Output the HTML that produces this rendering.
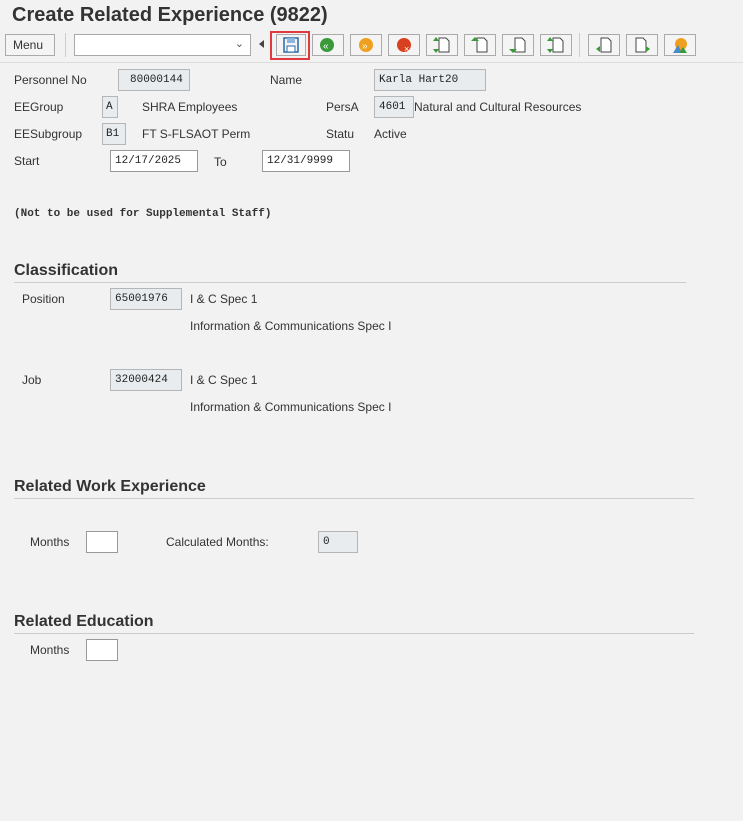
<!DOCTYPE html>
<html><head><style>
body{margin:0;width:743px;height:821px;background:#f2f2f2;font-family:"Liberation Sans",Arial,sans-serif;font-size:12px;color:#333;position:relative;overflow:hidden}
.a{position:absolute;white-space:nowrap}
.t{font-size:20px;font-weight:bold;color:#333}
.h{font-size:16px;font-weight:bold;color:#333}
.box{position:absolute;border:1px solid #b5b5b5;background:#e9ecee;font-family:"Liberation Mono",monospace;font-size:11px;line-height:20px;box-sizing:border-box;padding-left:4px;color:#222}
.w{background:#fff;border-color:#999}
.btn{position:absolute;top:34px;width:32px;height:22px;border:1px solid #aaa;background:#f4f4f4;box-sizing:border-box}
.line{position:absolute;height:1px;background:#ccc}
</style></head><body>
<div class="a t" style="left:12px;top:4px">Create Related Experience (9822)</div>
<div class="a" style="left:5px;top:34px;width:50px;height:22px;border:1px solid #aaa;background:#f4f4f4;box-sizing:border-box;font-size:12px;line-height:20px;padding-left:7px">Menu</div>
<div class="a" style="left:65px;top:33px;width:1px;height:24px;background:#ccc"></div>
<div class="a" style="left:74px;top:34px;width:177px;height:22px;border:1px solid #aaa;background:#fff;box-sizing:border-box"><span style="position:absolute;right:6px;top:2px;font-size:11px;color:#555">⌄</span></div>
<div class="a" style="left:259px;top:40px;width:0;height:0;border-top:4px solid transparent;border-bottom:4px solid transparent;border-right:5px solid #444"></div>
<div class="a" style="left:270px;top:31px;width:40px;height:29px;border:2px solid #e0393e;box-sizing:border-box"></div>
<div class="btn" style="left:276px;width:30px"><svg width="28" height="20"><rect x="7" y="3" width="14" height="14" fill="none" stroke="#2a6aa8" stroke-width="1.5"/><rect x="10" y="3" width="8" height="5" fill="#8fb7dc"/><rect x="10" y="11" width="8" height="6" fill="#fff" stroke="#2a6aa8"/></svg></div>
<div class="btn" style="left:312px"><svg width="30" height="20"><circle cx="14" cy="10" r="7" fill="#3a9a3a"/><text x="10" y="14" font-size="10" fill="#fff">«</text></svg></div>
<div class="btn" style="left:350px"><svg width="30" height="20"><circle cx="15" cy="10" r="7" fill="#f0a020"/><text x="11" y="14" font-size="10" fill="#fff">»</text></svg></div>
<div class="btn" style="left:388px"><svg width="30" height="20"><circle cx="15" cy="10" r="7" fill="#d84020"/><text x="15" y="17" font-size="9" fill="#fff">×</text></svg></div>
<div class="btn" style="left:426px"><svg width="30" height="20"><path d="M12 3h7l3 3v11h-10z" fill="#fff" stroke="#444"/><path d="M9 2l3 4h-6zM9 18l3-4h-6z" fill="#3a9a3a"/></svg></div>
<div class="btn" style="left:464px"><svg width="30" height="20"><path d="M12 3h7l3 3v11h-10z" fill="#fff" stroke="#444"/><path d="M10 2l4 4h-8z" fill="#3a9a3a"/></svg></div>
<div class="btn" style="left:502px"><svg width="30" height="20"><path d="M12 3h7l3 3v11h-10z" fill="#fff" stroke="#444"/><path d="M10 18l4-4h-8z" fill="#3a9a3a"/></svg></div>
<div class="btn" style="left:540px"><svg width="30" height="20"><path d="M12 3h7l3 3v11h-10z" fill="#fff" stroke="#444"/><path d="M9 2l3 4h-6zM9 18l3-4h-6z" fill="#3a9a3a"/></svg></div>
<div class="a" style="left:579px;top:33px;width:1px;height:24px;background:#ccc"></div>
<div class="btn" style="left:588px"><svg width="30" height="20"><path d="M12 3h7l3 3v11h-10z" fill="#fff" stroke="#444"/><path d="M7 14l4-3v6z" fill="#3a9a3a"/></svg></div>
<div class="btn" style="left:626px"><svg width="30" height="20"><path d="M9 3h7l3 3v11h-10z" fill="#fff" stroke="#444"/><path d="M23 14l-4-3v6z" fill="#3a9a3a"/></svg></div>
<div class="btn" style="left:664px"><svg width="30" height="20"><circle cx="16" cy="9" r="6" fill="#f0a020"/><path d="M8 18l5-8 4 8z" fill="#4a8ac8"/><path d="M14 18l4-6 4 6z" fill="#3a9a3a"/></svg></div>
<div class="line" style="left:0;top:62px;width:743px;background:#ddd"></div>

<div class="a" style="left:14px;top:73px">Personnel No</div>
<div class="box" style="left:118px;top:69px;width:72px;height:22px;padding-left:11px">80000144</div>
<div class="a" style="left:270px;top:73px">Name</div>
<div class="box" style="left:374px;top:69px;width:112px;height:22px">Karla Hart20</div>

<div class="a" style="left:14px;top:100px">EEGroup</div>
<div class="box" style="left:102px;top:96px;width:16px;height:22px;padding-left:3px">A</div>
<div class="a" style="left:142px;top:100px">SHRA Employees</div>
<div class="a" style="left:326px;top:100px">PersA</div>
<div class="box" style="left:374px;top:96px;width:40px;height:22px">4601</div>
<div class="a" style="left:414px;top:100px">Natural and Cultural Resources</div>

<div class="a" style="left:14px;top:127px">EESubgroup</div>
<div class="box" style="left:102px;top:123px;width:24px;height:22px;padding-left:3px">B1</div>
<div class="a" style="left:142px;top:127px">FT S-FLSAOT Perm</div>
<div class="a" style="left:326px;top:127px">Statu</div>
<div class="a" style="left:374px;top:127px">Active</div>

<div class="a" style="left:14px;top:154px">Start</div>
<div class="box w" style="left:110px;top:150px;width:88px;height:22px">12/17/2025</div>
<div class="a" style="left:214px;top:155px">To</div>
<div class="box w" style="left:262px;top:150px;width:88px;height:22px">12/31/9999</div>

<div class="a" style="left:14px;top:208px;font-family:'Liberation Mono',monospace;font-weight:bold;font-size:11px">(Not to be used for Supplemental Staff)</div>

<div class="a h" style="left:14px;top:262px">Classification</div>
<div class="line" style="left:14px;top:282px;width:672px"></div>
<div class="a" style="left:22px;top:292px">Position</div>
<div class="box" style="left:110px;top:288px;width:72px;height:22px">65001976</div>
<div class="a" style="left:190px;top:292px">I &amp; C Spec 1</div>
<div class="a" style="left:190px;top:319px">Information &amp; Communications Spec I</div>
<div class="a" style="left:22px;top:373px">Job</div>
<div class="box" style="left:110px;top:369px;width:72px;height:22px">32000424</div>
<div class="a" style="left:190px;top:373px">I &amp; C Spec 1</div>
<div class="a" style="left:190px;top:400px">Information &amp; Communications Spec I</div>

<div class="a h" style="left:14px;top:478px">Related Work Experience</div>
<div class="line" style="left:14px;top:498px;width:680px"></div>
<div class="a" style="left:30px;top:535px">Months</div>
<div class="box w" style="left:86px;top:531px;width:32px;height:22px"></div>
<div class="a" style="left:166px;top:535px">Calculated Months:</div>
<div class="box" style="left:318px;top:531px;width:40px;height:22px">0</div>

<div class="a h" style="left:14px;top:613px">Related Education</div>
<div class="line" style="left:14px;top:633px;width:680px"></div>
<div class="a" style="left:30px;top:643px">Months</div>
<div class="box w" style="left:86px;top:639px;width:32px;height:22px"></div>
</body></html>
